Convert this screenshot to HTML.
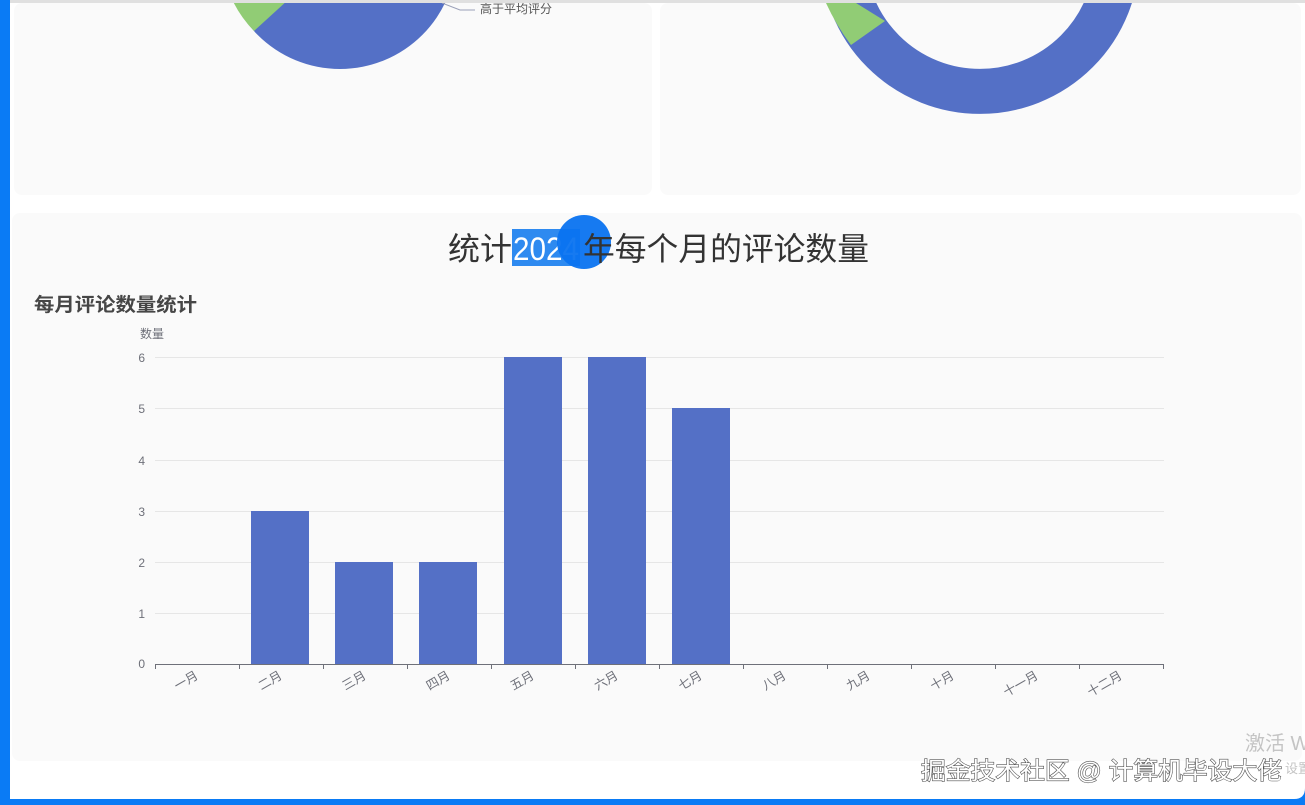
<!DOCTYPE html>
<html><head><meta charset="utf-8"><style>
html,body{margin:0;padding:0;width:1305px;height:805px;overflow:hidden;background:#fff;}
svg{display:block;font-family:"Liberation Sans","Noto Sans CJK SC",sans-serif;}
</style></head><body>
<svg width="1305" height="805" viewBox="0 0 1305 805">
<rect width="1305" height="805" fill="#0a7bf5"/>
<path d="M10 0 H1305 V788 Q1305 799 1294 799 H10 Z" fill="#ffffff"/>
<rect x="10" y="0" width="1295" height="3" fill="#e0e0e0"/>
<!-- cards -->
<rect x="14" y="3" width="638" height="192" rx="8" fill="#fafafa"/>
<rect x="660" y="3" width="641" height="192" rx="8" fill="#fafafa"/>
<rect x="12" y="213" width="1290" height="548" rx="8" fill="#fafafa"/>
<defs>
<clipPath id="cl"><rect x="10" y="3" width="1295" height="200"/></clipPath>
</defs>
<g clip-path="url(#cl)">
<circle cx="340" cy="-47.5" r="116.5" fill="#5470c6"/>
<path d="M340 -47.5 L254 31 A116.5 116.5 0 0 1 225 -20 Z" fill="#91cc75"/>
<path d="M442 3 L460 10 L475 10" stroke="#9aa0b8" fill="none" stroke-width="1"/>
<text x="480" y="13" font-size="12" fill="#555">高于平均评分</text>
<circle cx="980" cy="-45.6" r="137" fill="none" stroke="#5470c6" stroke-width="45"/>
<path d="M826 3 L856 3 L885 21 L851 45 Q836 25 826 3 Z" fill="#91cc75"/>
</g>
<rect x="512" y="229" width="68" height="37" fill="#2e8af0"/>
<text x="448" y="260" font-size="32" fill="#333" textLength="64" lengthAdjust="spacingAndGlyphs">统计</text>
<text x="513" y="260" font-size="32" fill="#fff" textLength="66" lengthAdjust="spacingAndGlyphs">2024</text>
<circle cx="584" cy="242" r="27" fill="#0a73f0" opacity="0.95"/>
<text x="583" y="260" font-size="32" fill="#333" textLength="286" lengthAdjust="spacingAndGlyphs">年每个月的评论数量</text>
<text x="34" y="311" font-size="19" font-weight="bold" fill="#464646" textLength="163" lengthAdjust="spacingAndGlyphs">每月评论数量统计</text>
<text x="140" y="338" font-size="12" fill="#6e7079">数量</text>
<g stroke="#e6e6e6" stroke-width="1">
<line x1="155" y1="357.5" x2="1164" y2="357.5"/>
<line x1="155" y1="408.5" x2="1164" y2="408.5"/>
<line x1="155" y1="460.5" x2="1164" y2="460.5"/>
<line x1="155" y1="511.5" x2="1164" y2="511.5"/>
<line x1="155" y1="562.5" x2="1164" y2="562.5"/>
<line x1="155" y1="613.5" x2="1164" y2="613.5"/>
</g>
<g font-size="12" fill="#6e7079" text-anchor="end">
<text x="145" y="362">6</text><text x="145" y="413">5</text><text x="145" y="465">4</text>
<text x="145" y="516">3</text><text x="145" y="567">2</text><text x="145" y="618">1</text><text x="145" y="668">0</text>
</g>
<g fill="#5470c6">
<rect x="251" y="511" width="58" height="153"/>
<rect x="335" y="562" width="58" height="102"/>
<rect x="419" y="562" width="58" height="102"/>
<rect x="504" y="357" width="58" height="307"/>
<rect x="588" y="357" width="58" height="307"/>
<rect x="672" y="408" width="58" height="256"/>
</g>
<line x1="155" y1="664.5" x2="1164" y2="664.5" stroke="#6e7079"/>
<g stroke="#6e7079">
<line x1="155.5" y1="664" x2="155.5" y2="669"/><line x1="239.5" y1="664" x2="239.5" y2="669"/>
<line x1="323.5" y1="664" x2="323.5" y2="669"/><line x1="407.5" y1="664" x2="407.5" y2="669"/>
<line x1="491.5" y1="664" x2="491.5" y2="669"/><line x1="575.5" y1="664" x2="575.5" y2="669"/>
<line x1="659.5" y1="664" x2="659.5" y2="669"/><line x1="743.5" y1="664" x2="743.5" y2="669"/>
<line x1="827.5" y1="664" x2="827.5" y2="669"/><line x1="911.5" y1="664" x2="911.5" y2="669"/>
<line x1="995.5" y1="664" x2="995.5" y2="669"/><line x1="1079.5" y1="664" x2="1079.5" y2="669"/>
<line x1="1163.5" y1="664" x2="1163.5" y2="669"/>
</g>
<g font-size="12.5" fill="#6e7079" text-anchor="end">
<text transform="translate(199,678) rotate(-30)">一月</text>
<text transform="translate(283,678) rotate(-30)">二月</text>
<text transform="translate(367,678) rotate(-30)">三月</text>
<text transform="translate(451,678) rotate(-30)">四月</text>
<text transform="translate(535,678) rotate(-30)">五月</text>
<text transform="translate(619,678) rotate(-30)">六月</text>
<text transform="translate(703,678) rotate(-30)">七月</text>
<text transform="translate(787,678) rotate(-30)">八月</text>
<text transform="translate(871,678) rotate(-30)">九月</text>
<text transform="translate(955,678) rotate(-30)">十月</text>
<text transform="translate(1039,678) rotate(-30)">十一月</text>
<text transform="translate(1123,678) rotate(-30)">十二月</text>
</g>
<text x="1245" y="750" font-size="20" fill="#c4c4c4">激活 W</text>
<text x="1285" y="773" font-size="13" fill="#c4c4c4">设置</text>
<text x="921" y="779" font-size="24" fill="#fff" stroke="#555" stroke-width="1.2" paint-order="stroke" textLength="361" lengthAdjust="spacingAndGlyphs">掘金技术社区 @ 计算机毕设大佬</text>
</svg>
</body></html>
